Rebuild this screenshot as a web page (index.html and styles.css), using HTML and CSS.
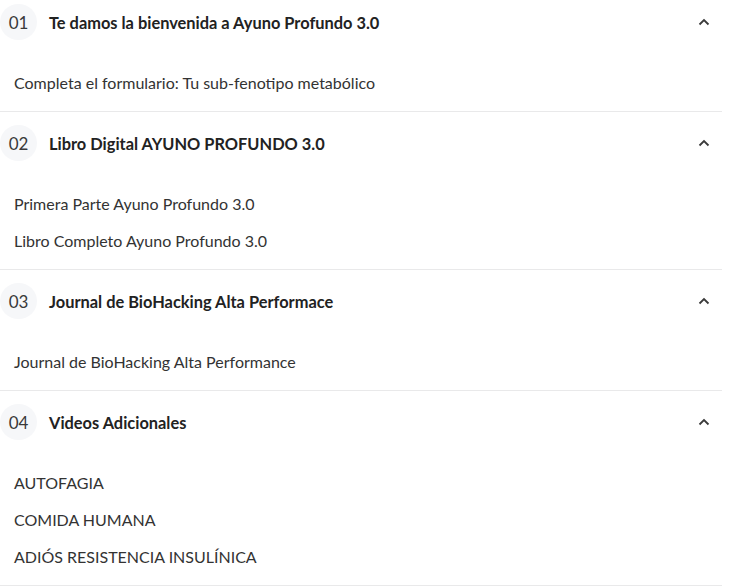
FILE: index.html
```html
<!DOCTYPE html>
<html lang="es">
<head>
<meta charset="utf-8">
<link rel="stylesheet" href="styles.css">
</head>
<body>
<div class="accordion">
  <section class="section first">
    <div class="head">
      <span class="num">01</span>
      <span class="title">Te damos la bienvenida a Ayuno Profundo 3.0</span>
      <svg class="chev" width="12" height="8" viewBox="0 0 12 8"><path d="M1.5 6.5 L6 2 L10.5 6.5" fill="none" stroke="#3a3a3a" stroke-width="1.8"/></svg>
    </div>
    <ul class="items">
      <li>Completa el formulario: Tu sub-fenotipo metabólico</li>
    </ul>
  </section>
  <section class="section">
    <div class="head">
      <span class="num">02</span>
      <span class="title">Libro Digital AYUNO PROFUNDO 3.0</span>
      <svg class="chev" width="12" height="8" viewBox="0 0 12 8"><path d="M1.5 6.5 L6 2 L10.5 6.5" fill="none" stroke="#3a3a3a" stroke-width="1.8"/></svg>
    </div>
    <ul class="items">
      <li>Primera Parte Ayuno Profundo 3.0</li>
      <li>Libro Completo Ayuno Profundo 3.0</li>
    </ul>
  </section>
  <section class="section">
    <div class="head">
      <span class="num">03</span>
      <span class="title">Journal de BioHacking Alta Performace</span>
      <svg class="chev" width="12" height="8" viewBox="0 0 12 8"><path d="M1.5 6.5 L6 2 L10.5 6.5" fill="none" stroke="#3a3a3a" stroke-width="1.8"/></svg>
    </div>
    <ul class="items">
      <li>Journal de BioHacking Alta Performance</li>
    </ul>
  </section>
  <section class="section">
    <div class="head">
      <span class="num">04</span>
      <span class="title">Videos Adicionales</span>
      <svg class="chev" width="12" height="8" viewBox="0 0 12 8"><path d="M1.5 6.5 L6 2 L10.5 6.5" fill="none" stroke="#3a3a3a" stroke-width="1.8"/></svg>
    </div>
    <ul class="items">
      <li>AUTOFAGIA</li>
      <li>COMIDA HUMANA</li>
      <li>ADIÓS RESISTENCIA INSULÍNICA</li>
    </ul>
  </section>
</div>
</body>
</html>
```
FILE: styles.css
```css
* { box-sizing: border-box; }
html, body { margin: 0; padding: 0; background: #fff; }
body {
  font-family: Lato, "Open Sans", sans-serif;
  color: #333;
}
.accordion {
  width: 722px;
}
.section {
  border-bottom: 1px solid #e9e9ea;
  padding: 13px 0 10px;
}
.section.first {
  padding-top: 4px;
}
.head {
  display: flex;
  align-items: center;
  height: 36px;
}
.num {
  width: 37px;
  height: 36px;
  border-radius: 50%;
  background: #f6f7f9;
  display: flex;
  align-items: center;
  justify-content: center;
  font-size: 17px;
  color: #3a3a3a;
  flex: none;
}
.title {
  margin-left: 12px;
  font-size: 16.4px;
  font-weight: 700;
  color: #222;
  flex: 1;
}
.chev {
  margin-right: 12px;
  flex: none;
}
.items {
  list-style: none;
  margin: 24px 0 0;
  padding: 0 0 0 14px;
}
.items li {
  font-size: 16px;
  line-height: 21px;
  padding: 8px 0;
  color: #333;
}
```
